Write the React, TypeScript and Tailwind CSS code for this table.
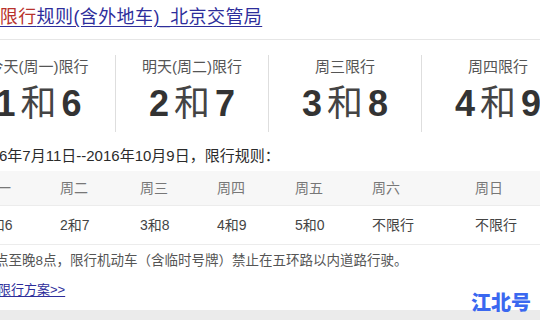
import React from "react";

const FONT = { fontFamily: '"Liberation Sans", "Noto Sans CJK SC", sans-serif' };

const cards = [
  { label: "今天(周一)限行", a: "1", b: "6" },
  { label: "明天(周二)限行", a: "2", b: "7" },
  { label: "周三限行", a: "3", b: "8" },
  { label: "周四限行", a: "4", b: "9" },
];

const days = [
  { d: "周一", v: "1和6" },
  { d: "周二", v: "2和7" },
  { d: "周三", v: "3和8" },
  { d: "周四", v: "4和9" },
  { d: "周五", v: "5和0" },
  { d: "周六", v: "不限行" },
  { d: "周日", v: "不限行" },
];

export default function App() {
  return (
    <div
      className="relative w-[540px] h-[320px] overflow-hidden bg-white flex flex-col"
      style={FONT}
    >
      {/* Title */}
      <div className="h-[40px] shrink-0 border-b border-[#e6e6e6] whitespace-nowrap">
        <a className="block pt-[7px] text-[18px] leading-[20px] tracking-[0.4px] ml-[-37px] underline underline-offset-[3px] text-[#2d2d9b]">
          <span className="text-[#b8322c]">北京限行</span>
          规则(含外地车)_北京交管局
        </a>
      </div>

      {/* Cards */}
      <div className="grid grid-cols-[153px_153px_153px_153px] ml-[-38px] mt-[15px] shrink-0">
        {cards.map((c, i) => (
          <div
            key={i}
            className={
              "flex flex-col items-center h-[77px] whitespace-nowrap " +
              (i > 0 ? "border-l border-[#dedede]" : "")
            }
          >
            <div className="text-[15px] leading-[24px] text-[#555]">{c.label}</div>
            <div className="mt-[5px] h-[40px] flex items-center text-[36px] leading-[40px] text-[#333]">
              <span className="font-bold">{c.a}</span>
              <span className="mx-[5px] text-[#444]">和</span>
              <span className="font-bold">{c.b}</span>
            </div>
          </div>
        ))}
      </div>

      {/* Date rule */}
      <div className="mt-[14px] ml-[-26px] text-[15px] leading-[20px] text-[#2b2b2b] whitespace-nowrap shrink-0">
        2016年7月11日--2016年10月9日，限行规则：
      </div>

      {/* Table */}
      <div className="mt-[5px] ml-[-17px] shrink-0 whitespace-nowrap">
        <div className="grid grid-cols-[77px_80px_77px_78px_77px_103px_100px] h-[35px] bg-[#f7f7f7] border-b border-[#ececec] items-center text-[14px] text-[#777]">
          {days.map((x) => (
            <div key={x.d}>{x.d}</div>
          ))}
        </div>
        <div className="grid grid-cols-[77px_80px_77px_78px_77px_103px_100px] h-[39px] border-b border-[#ececec] items-center text-[14px] text-[#444]">
          {days.map((x) => (
            <div key={x.d}>{x.v}</div>
          ))}
        </div>
      </div>

      {/* Note */}
      <div className="mt-[6px] ml-[-26px] text-[13.5px] leading-[20px] text-[#555] whitespace-nowrap shrink-0">
        早7点至晚8点，限行机动车（含临时号牌）禁止在五环路以内道路行驶。
      </div>

      <div className="mt-[9px] ml-[-2px] text-[13px] leading-[20px] shrink-0">
        <a className="underline underline-offset-[2px] text-[#2d2d9b]">限行方案&gt;&gt;</a>
      </div>

      {/* Bottom bar */}
      <div className="mt-auto h-[10px] bg-[#ebebeb] shrink-0" />

      {/* Watermark */}
      <div
        className="absolute left-[471px] top-[291px] text-[20px] leading-[22px] font-black text-[#3a68f0]"
        style={{ fontFamily: '"Noto Sans CJK SC", sans-serif' }}
      >
        江北号
      </div>
    </div>
  );
}
